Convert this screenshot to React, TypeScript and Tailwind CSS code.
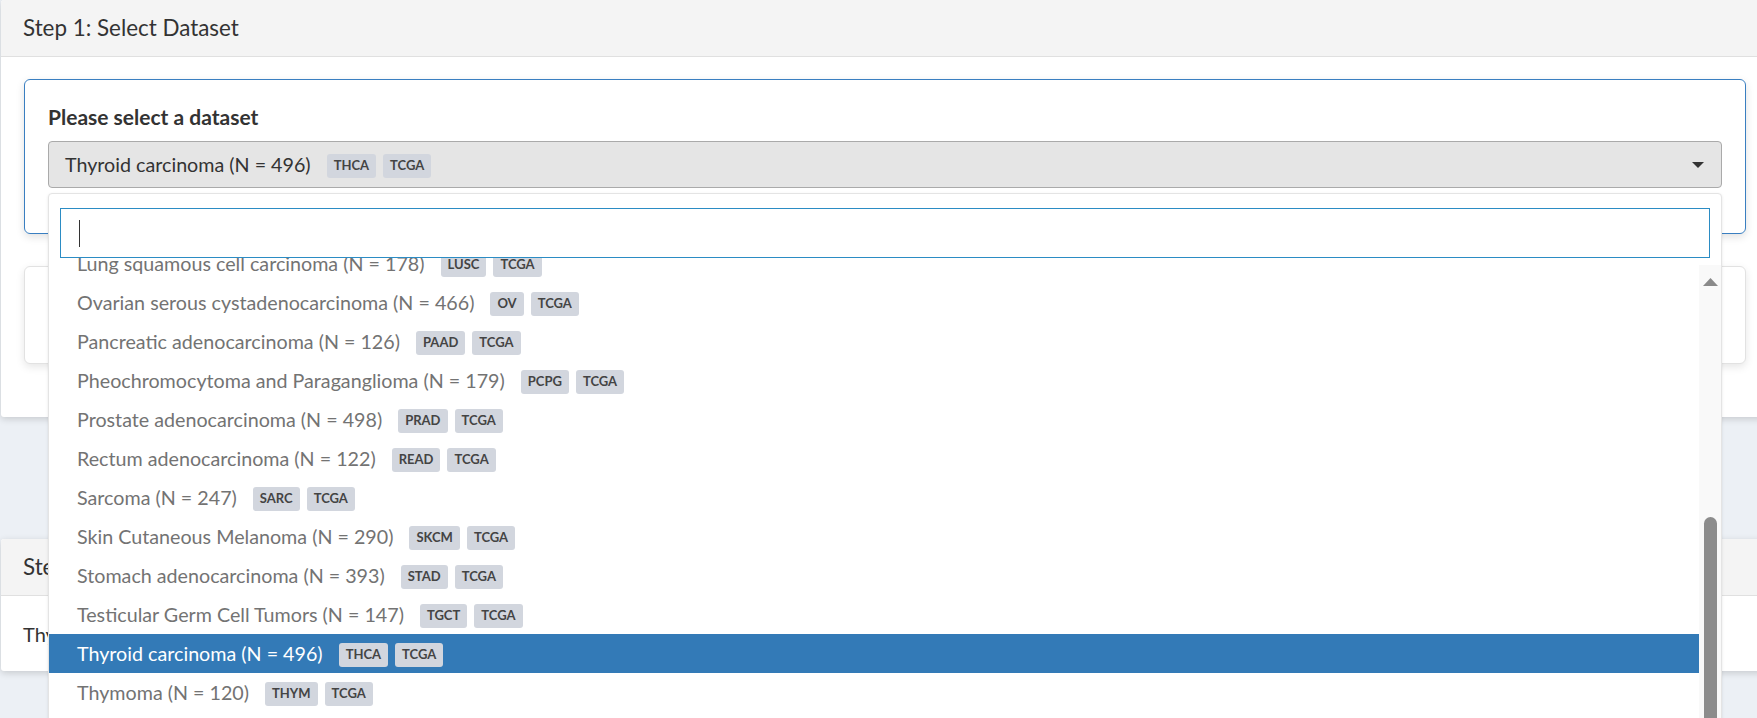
import { useLayoutEffect, useRef } from "react";
import clsx from "clsx";

type Dataset = {
  name: string;
  n: number;
  code: string;
  source: string;
};

// TCGA cohorts, ordered by study code
const datasets: Dataset[] = [
  { name: "Adrenocortical carcinoma", n: 79, code: "ACC", source: "TCGA" },
  { name: "Bladder Urothelial Carcinoma", n: 412, code: "BLCA", source: "TCGA" },
  { name: "Breast invasive carcinoma", n: 1098, code: "BRCA", source: "TCGA" },
  { name: "Cervical squamous cell carcinoma", n: 307, code: "CESC", source: "TCGA" },
  { name: "Cholangiocarcinoma", n: 51, code: "CHOL", source: "TCGA" },
  { name: "Colon adenocarcinoma", n: 461, code: "COAD", source: "TCGA" },
  { name: "Esophageal carcinoma", n: 185, code: "ESCA", source: "TCGA" },
  { name: "Glioblastoma multiforme", n: 617, code: "GBM", source: "TCGA" },
  { name: "Head and Neck squamous cell carcinoma", n: 528, code: "HNSC", source: "TCGA" },
  { name: "Kidney Chromophobe", n: 113, code: "KICH", source: "TCGA" },
  { name: "Kidney renal clear cell carcinoma", n: 537, code: "KIRC", source: "TCGA" },
  { name: "Kidney renal papillary cell carcinoma", n: 291, code: "KIRP", source: "TCGA" },
  { name: "Brain Lower Grade Glioma", n: 516, code: "LGG", source: "TCGA" },
  { name: "Liver hepatocellular carcinoma", n: 377, code: "LIHC", source: "TCGA" },
  { name: "Lung adenocarcinoma", n: 515, code: "LUAD", source: "TCGA" },
  { name: "Lung squamous cell carcinoma", n: 178, code: "LUSC", source: "TCGA" },
  { name: "Ovarian serous cystadenocarcinoma", n: 466, code: "OV", source: "TCGA" },
  { name: "Pancreatic adenocarcinoma", n: 126, code: "PAAD", source: "TCGA" },
  { name: "Pheochromocytoma and Paraganglioma", n: 179, code: "PCPG", source: "TCGA" },
  { name: "Prostate adenocarcinoma", n: 498, code: "PRAD", source: "TCGA" },
  { name: "Rectum adenocarcinoma", n: 122, code: "READ", source: "TCGA" },
  { name: "Sarcoma", n: 247, code: "SARC", source: "TCGA" },
  { name: "Skin Cutaneous Melanoma", n: 290, code: "SKCM", source: "TCGA" },
  { name: "Stomach adenocarcinoma", n: 393, code: "STAD", source: "TCGA" },
  { name: "Testicular Germ Cell Tumors", n: 147, code: "TGCT", source: "TCGA" },
  { name: "Thyroid carcinoma", n: 496, code: "THCA", source: "TCGA" },
  { name: "Thymoma", n: 120, code: "THYM", source: "TCGA" },
  { name: "Uterine Corpus Endometrial Carcinoma", n: 545, code: "UCEC", source: "TCGA" },
  { name: "Uterine Carcinosarcoma", n: 57, code: "UCS", source: "TCGA" },
  { name: "Uveal Melanoma", n: 80, code: "UVM", source: "TCGA" },
];

const ROW_HEIGHT = 39;

const Tag = ({ label }: { label: string }) => (
  <span className="inline-flex h-[24px] items-center rounded-[3px] bg-[#d2d6de] px-[7px] text-[13px] font-bold text-[#444]">
    {label}
  </span>
);

const DatasetLabel = ({ d }: { d: Dataset }) => (
  <>
    <span>
      {d.name} (N = {d.n})
    </span>
    <span className="ml-4 mt-[3px] flex gap-[7px]">
      <Tag label={d.code} />
      <Tag label={d.source} />
    </span>
  </>
);

const DatasetSelect = ({ selected }: { selected: string }) => {
  const listRef = useRef<HTMLDivElement>(null);
  const current = datasets.find((d) => d.code === selected)!;

  useLayoutEffect(() => {
    const first = datasets.findIndex((d) => d.code === "LUSC");
    if (listRef.current) listRef.current.scrollTop = first * ROW_HEIGHT + 14;
  }, []);

  return (
    <div className="relative">
      <div className="flex h-[47px] items-center rounded-[4px] border border-[#aaa] bg-[#e5e5e5] pl-[16px] pr-[17px] text-[19.7px] text-[#333]">
        <DatasetLabel d={current} />
        <svg className="ml-auto" width="12" height="6" viewBox="0 0 12 6">
          <path d="M0 0h12L6 6z" fill="#333" />
        </svg>
      </div>

      {/* open dropdown */}
      <div className="absolute left-0 right-0 top-[calc(100%+5px)] z-10 rounded-t-[4px] border border-[#e4e4e4] bg-white shadow-[0_1px_3px_rgba(0,0,0,0.1)]">
        <div className="px-[11px] pt-[14px]">
          <div className="flex h-[50px] items-center border border-[#2b8cc4] pl-[18px]">
            <span className="h-[27px] w-px bg-[#333]" />
          </div>
        </div>
        <div className="flex h-[480px]">
          <div
            ref={listRef}
            className="flex-1 overflow-y-auto [scrollbar-width:none]"
          >
            {datasets.map((d) => (
              <div
                key={d.code}
                className={clsx(
                  "flex h-[39px] items-center pl-[28px] text-[19.7px]",
                  d.code === selected ? "bg-[#337ab7] text-white" : "text-[#737373]"
                )}
              >
                <DatasetLabel d={d} />
              </div>
            ))}
          </div>
          <div className="mt-[7px] flex w-[22px] flex-col items-center bg-[#f9f9f9]">
            <svg className="mt-[13px]" width="15" height="8" viewBox="0 0 15 8">
              <path d="M7.5 0L15 8H0z" fill="#8a8a8a" />
            </svg>
            <div className="mt-[231px] w-[13px] flex-1 rounded-t-full bg-[#8c8c8c]" />
          </div>
        </div>
      </div>
    </div>
  );
};

const App = () => {
  return (
    <div className="relative h-[718px] overflow-hidden bg-[#ecf0f5] font-['Lato','Liberation_Sans',sans-serif] text-[#333]">
      {/* Step 1 */}
      <div className="-mr-2 ml-px rounded-[3px] bg-white shadow-[0_2px_7px_rgba(0,0,0,0.16)]">
        <div className="flex h-[57px] items-center rounded-t-[3px] border-b border-[#e0e0e0] bg-[#f4f4f4] pl-[22px] text-[22.4px]">
          Step 1: Select Dataset
        </div>
        <div className="pb-[53px] pl-[23px] pr-[19px] pt-[22px]">
          <div className="rounded-[6px] border border-[#3a7fc1] px-[23px] pb-[45px] pt-[25px] shadow-[0_3px_8px_rgba(0,0,0,0.12)]">
            <div className="mb-[12px] text-[21px] font-bold leading-[24px]">
              Please select a dataset
            </div>
            <DatasetSelect selected="THCA" />
          </div>
          <div className="mt-[32px] h-[98px] rounded-[6px] border border-[#e2e2e2] bg-white shadow-[0_3px_8px_rgba(0,0,0,0.1)]" />
        </div>
      </div>

      {/* Step 2 */}
      <div className="-mr-2 ml-px mt-[122px] rounded-[3px] bg-white shadow-[0_2px_7px_rgba(0,0,0,0.16)]">
        <div className="flex h-[57px] items-center rounded-t-[3px] border-b border-[#e0e0e0] bg-[#f4f4f4] pl-[22px] text-[22.4px]">
          Step 2: Selected Dataset
        </div>
        <div className="flex h-[75px] items-center pl-[22px] text-[20px]">
          Thyroid carcinoma (N = 496)
        </div>
      </div>
    </div>
  );
};

export default App;
